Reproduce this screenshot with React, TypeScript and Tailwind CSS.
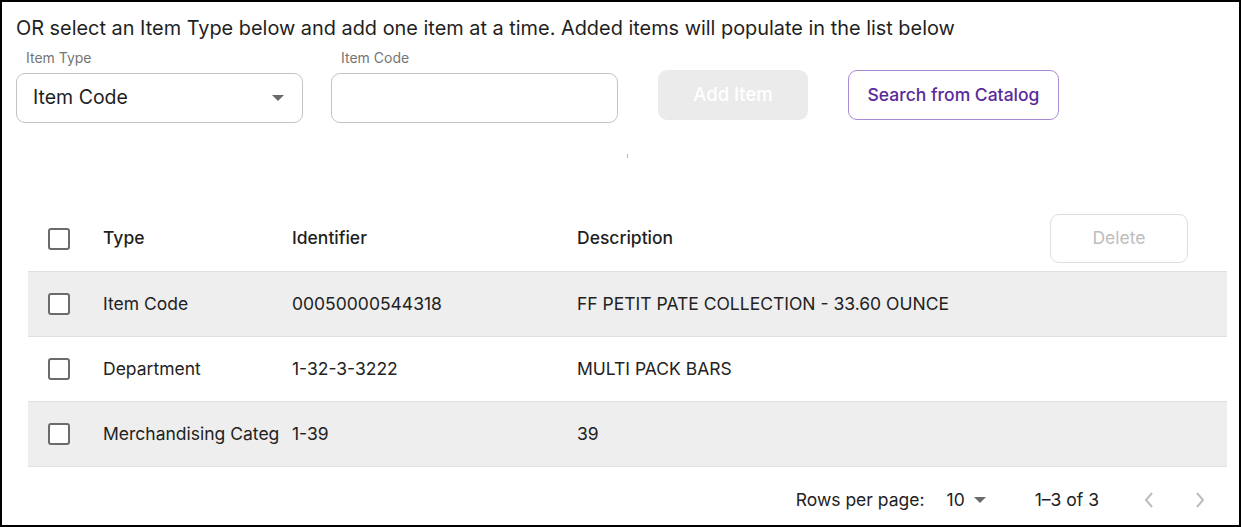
import React from 'react';

type Row = { type: string; identifier: string; description: string };

const rows: Row[] = [
  { type: 'Item Code', identifier: '00050000544318', description: 'FF PETIT PATE COLLECTION - 33.60 OUNCE' },
  { type: 'Department', identifier: '1-32-3-3222', description: 'MULTI PACK BARS' },
  { type: 'Merchandising Category', identifier: '1-39', description: '39' },
];

function Checkbox() {
  return <div className="h-[22px] w-[22px] rounded-[3px] border-2 border-[#6b6b6b] bg-white" />;
}

function Caret({ className }: { className?: string }) {
  return (
    <svg width="12" height="6" viewBox="0 0 12 6" className={className}>
      <path d="M0 0h12L6 6z" fill="#6b6b6b" />
    </svg>
  );
}

export default function App() {
  return (
    <div
      className="h-[527px] w-[1241px] overflow-hidden border-2 border-black bg-white text-[#222]"
      style={{ fontFamily: 'Inter, "Noto Sans", sans-serif' }}
    >
      <p className="pl-[14px] pt-[14px] text-[19.9px] leading-[24px] text-[#1f1f1f]">
        OR select an Item Type below and add one item at a time. Added items will populate in the list below
      </p>

      {/* form row */}
      <div className="mt-[6px] flex items-start pl-[14px]">
        <div className="flex w-[287px] flex-col">
          <label className="pl-[10px] text-[14px] leading-[24px] text-[#757575]">Item Type</label>
          <div className="mt-[3px] flex h-[50px] items-center justify-between rounded-[9px] border border-[#c4c4c4] pl-[16px] pr-[18px]">
            <span className="text-[19.5px] text-[#1f1f1f]">Item Code</span>
            <Caret />
          </div>
        </div>
        <div className="ml-[28px] flex w-[287px] flex-col">
          <label className="pl-[10px] text-[14px] leading-[24px] text-[#757575]">Item Code</label>
          <div className="mt-[3px] h-[50px] rounded-[9px] border border-[#c4c4c4]" />
        </div>
        <button className="ml-[40px] mt-[24px] h-[50px] w-[150px] rounded-[9px] bg-[#ebebeb] text-[18.5px] font-medium text-white">
          Add Item
        </button>
        <button className="ml-[40px] mt-[24px] h-[50px] w-[211px] rounded-[9px] border border-[#a98ad6] text-[17.5px] font-medium text-[#5a2a9a]">
          Search from Catalog
        </button>
      </div>

      <div className="ml-[625px] mt-[31px] h-[4px] w-[1px] bg-[#b5b5b5]" />

      {/* table */}
      <div className="ml-[26px] mr-[12px] mt-[48px]">
        <div className="grid h-[66px] grid-cols-[75px_189px_285px_1fr] items-center border-b border-[#e0e0e0] text-[17.5px] font-medium text-[#1f1f1f]">
          <div className="pl-[20px]">
            <Checkbox />
          </div>
          <div>Type</div>
          <div>Identifier</div>
          <div className="flex items-center justify-between pr-[39px]">
            <span>Description</span>
            <button className="h-[49px] w-[138px] rounded-[9px] border border-[#dedede] text-[17.5px] font-normal text-[#bdbdbd]">
              Delete
            </button>
          </div>
        </div>
        {rows.map((r, i) => (
          <div
            key={i}
            className={`grid h-[65px] grid-cols-[75px_189px_285px_1fr] items-center border-b border-[#e0e0e0] text-[17.5px] text-[#222] ${
              i % 2 === 0 ? 'bg-[#eeeeee]' : 'bg-white'
            }`}
          >
            <div className="pl-[20px]">
              <Checkbox />
            </div>
            <div className="w-[176px] overflow-hidden whitespace-nowrap">{r.type}</div>
            <div className="overflow-hidden whitespace-nowrap pr-[12px]">{r.identifier}</div>
            <div className="whitespace-nowrap">{r.description}</div>
          </div>
        ))}

        {/* pagination */}
        <div className="flex h-[66px] items-center justify-end pr-[21px] text-[17.5px] text-[#222]">
          <span>Rows per page:</span>
          <span className="ml-[22px]">10</span>
          <Caret className="ml-[9px]" />
          <span className="ml-[49px]">1–3 of 3</span>
          <svg width="12" height="18" viewBox="0 0 12 18" className="ml-[44px]">
            <path d="M9 2 3 9l6 7" fill="none" stroke="#bdbdbd" strokeWidth="2" />
          </svg>
          <svg width="12" height="18" viewBox="0 0 12 18" className="ml-[39px]">
            <path d="M3 2l6 7-6 7" fill="none" stroke="#bdbdbd" strokeWidth="2" />
          </svg>
        </div>
      </div>
    </div>
  );
}
